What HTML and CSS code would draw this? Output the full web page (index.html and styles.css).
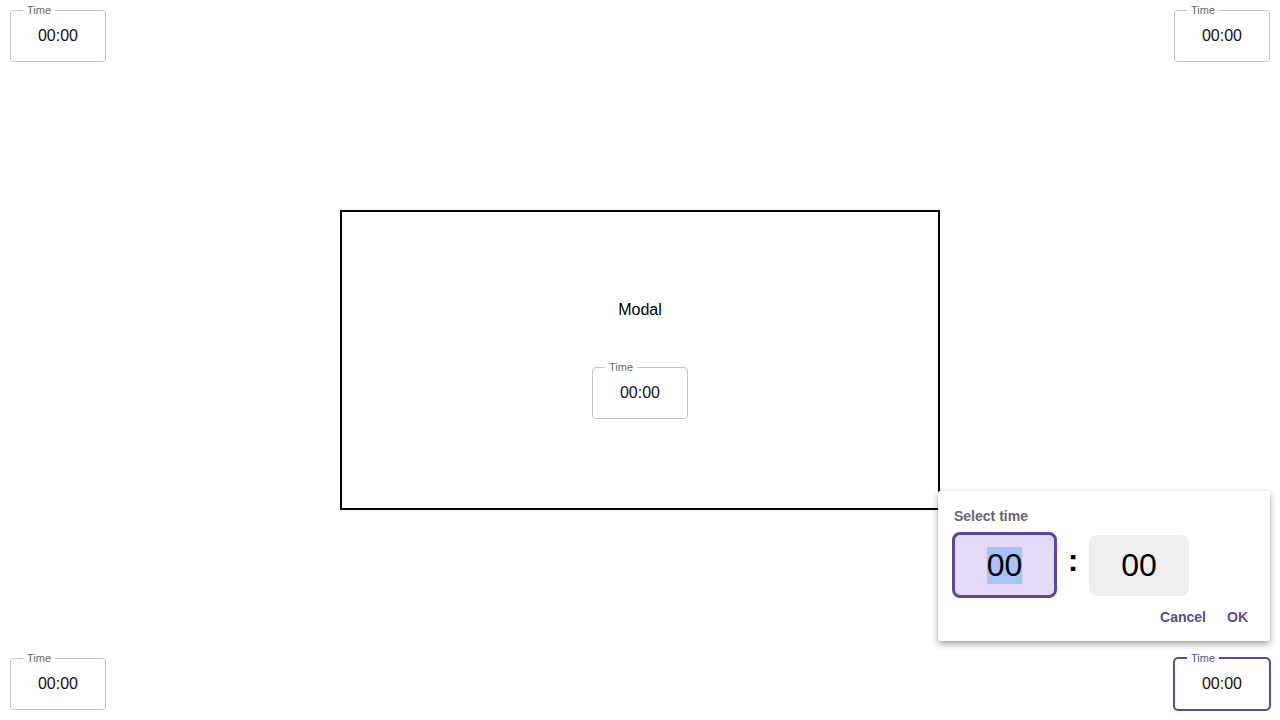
FILE: index.html
```html
<!DOCTYPE html>
<html lang="en">
<head>
<meta charset="utf-8">
<title>Time fields</title>
<link rel="stylesheet" href="styles.css">
</head>
<body>
<div class="page">
  <div class="row">
    <div class="field"><span class="field-label">Time</span><span class="field-value">00:00</span></div>
    <div class="field"><span class="field-label">Time</span><span class="field-value">00:00</span></div>
  </div>
  <div class="middle">
    <div class="modal">
      <div class="modal-title">Modal</div>
      <div class="field"><span class="field-label">Time</span><span class="field-value">00:00</span></div>
    </div>
  </div>
  <div class="row">
    <div class="field"><span class="field-label">Time</span><span class="field-value">00:00</span></div>
    <div class="field field-focused">
      <span class="field-label">Time</span><span class="field-value">00:00</span>
      <div class="picker">
        <div class="picker-title">Select time</div>
        <div class="picker-inputs">
          <div class="seg seg-active"><span class="sel">00</span></div>
          <div class="colon">:</div>
          <div class="seg">00</div>
        </div>
        <div class="picker-actions">
          <button class="btn">Cancel</button>
          <button class="btn">OK</button>
        </div>
      </div>
    </div>
  </div>
</div>
</body>
</html>
```

FILE: styles.css
```css
* { box-sizing: border-box; }
html, body { margin: 0; padding: 0; background: #fff; }
body {
  font-family: "Liberation Sans", Arial, sans-serif;
  color: #000;
}
.page {
  height: 720px;
  padding: 10px;
  display: flex;
  flex-direction: column;
}
.row {
  display: flex;
  justify-content: space-between;
  align-items: flex-start;
}
.middle {
  flex: 1;
  display: flex;
  align-items: center;
  justify-content: center;
}
.modal {
  width: 600px;
  height: 300px;
  border: 2px solid #000;
  display: flex;
  flex-direction: column;
  align-items: center;
  justify-content: center;
  gap: 48px;
}
.modal-title {
  font-size: 16px;
  line-height: 18px;
}
.field {
  position: relative;
  width: 96px;
  height: 52px;
  border: 1px solid #c4c4c4;
  border-radius: 4px;
  display: flex;
  align-items: center;
  justify-content: center;
  background: #fff;
}
.field-label {
  position: absolute;
  top: -7px;
  left: 12px;
  padding: 0 4px;
  background: #fff;
  font-size: 11px;
  line-height: 13px;
  color: #666;
}
.field-value {
  font-size: 16px;
  line-height: 18px;
  color: #111;
}
.field-focused {
  border-color: #5b46a1;
  box-shadow: 0 0 0 1px #5b46a1;
}
.field-focused .field-label { color: #5b46a1; }

.picker {
  position: absolute;
  right: -1px;
  bottom: calc(100% + 18px);
  width: 332px;
  padding: 17px 14px 12px 14px;
  background: #fff;
  border-radius: 2px;
  box-shadow: 0 3px 7px rgba(0, 0, 0, 0.35), 0 0 2px rgba(0, 0, 0, 0.12);
  display: flex;
  flex-direction: column;
}
.picker-title {
  font-size: 14px;
  line-height: 16px;
  font-weight: bold;
  color: #68666e;
  padding-left: 2px;
}
.picker-inputs {
  display: flex;
  align-items: center;
  margin-top: 8px;
}
.seg {
  width: 100px;
  height: 61px;
  border-radius: 8px;
  background: #eeeeee;
  display: flex;
  align-items: center;
  justify-content: center;
  font-size: 32px;
  line-height: 37px;
  color: #000;
}
.seg-active {
  width: 105px;
  height: 66px;
  border: 3px solid #5b46a1;
  border-radius: 8px;
  background: #e4d9f6;
}
.sel { background: #a6c4f8; }
.colon {
  font-size: 32px;
  line-height: 37px;
  font-weight: bold;
  width: 32px;
  text-align: center;
  margin-top: -10px;
}
.picker-actions {
  display: flex;
  justify-content: flex-end;
  gap: 5px;
  margin-top: 7px;
}
.btn {
  font-family: "Liberation Sans", Arial, sans-serif;
  font-size: 14px;
  line-height: 16px;
  font-weight: bold;
  color: #5b46a1;
  background: transparent;
  border: 0;
  padding: 4px 8px;
  cursor: pointer;
}
```
